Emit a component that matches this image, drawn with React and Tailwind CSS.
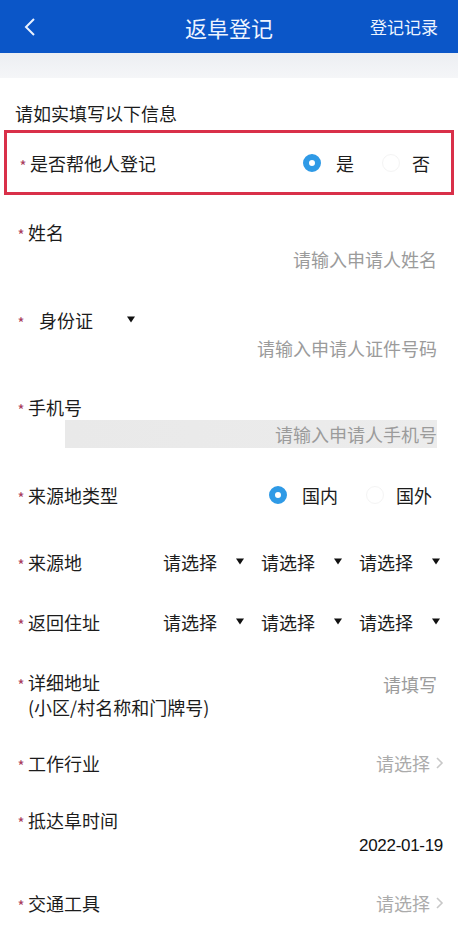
import React from 'react';

const font = { fontFamily: '"Noto Sans CJK SC", "Noto Sans", sans-serif' };

const Star = () => (
  <span className="block w-[14px] shrink-0 text-center text-[15px] leading-[24px] text-[#a83c5c] translate-y-[3px]">*</span>
);

const Tri = () => (
  <svg width="8" height="8" viewBox="0 0 8 8" className="block shrink-0 -translate-y-[1px]">
    <path d="M0 1.5 H8 L4 7.5 Z" fill="#111" />
  </svg>
);

const Chevron = () => (
  <svg width="9" height="14" viewBox="0 0 9 14" className="block shrink-0">
    <path d="M2 2 L7 7 L2 12" fill="none" stroke="#c8c8c8" strokeWidth="1.6" />
  </svg>
);

const Radio = ({ on, className = '' }) =>
  on ? (
    <span className={`block w-[18px] h-[18px] rounded-full border-[6px] border-[#2f9ae6] bg-white shrink-0 ${className}`} />
  ) : (
    <span className={`block w-[18px] h-[18px] rounded-full border border-[#f4f4f4] bg-white shrink-0 ${className}`} />
  );

const RadioPair = ({ a, b, className = '' }) => (
  <div className={`ml-auto flex items-center ${className}`}>
    <Radio on />
    <span className="ml-[15px]">{a}</span>
    <Radio className="ml-[28px]" />
    <span className="ml-[12px]">{b}</span>
  </div>
);

const Selects = () => (
  <div className="ml-auto -mr-[3px] flex items-center gap-[17px]">
    {[0, 1, 2].map((i) => (
      <div key={i} className="flex items-center gap-[19px]">
        <span>请选择</span>
        <Tri />
      </div>
    ))}
  </div>
);

const Label = ({ children, className = '' }) => (
  <div className={`flex items-center ${className}`}>
    <Star />
    {children}
  </div>
);

export default function App() {
  return (
    <div style={font} className="w-[458px] min-h-[951px] bg-white text-[18px] leading-[24px] text-[#1c1c1c] overflow-hidden">
      {/* header */}
      <div className="h-[53px] bg-[#0b56c8] flex items-center px-[20px] relative">
        <svg width="14" height="20" viewBox="0 0 14 20" className="ml-[3px]">
          <path d="M11 2 L3 10 L11 18" fill="none" stroke="#eaf2ff" strokeWidth="2" />
        </svg>
        <div className="absolute left-0 right-0 text-center text-[22px] text-[#eef4ff] pointer-events-none">返阜登记</div>
        <div className="ml-auto text-[17px] text-[#eef4ff]">登记记录</div>
      </div>
      <div className="h-[25px] bg-gradient-to-b from-[#eceef2] to-[#f5f6f8]" />

      <div className="px-[15px] pt-[23px]">请如实填写以下信息</div>

      {/* highlighted row */}
      <div className="mt-[5px] mx-[4px] h-[65px] border-[3px] border-[#d93049] flex items-center pl-[9px] pr-[21px]">
        <Label>是否帮他人登记</Label>
        <RadioPair a="是" b="否" />
      </div>

      <div className="pl-[14px] pr-[21px]">
        {/* 姓名 */}
        <Label className="mt-[25px]">姓名</Label>
        <div className="mt-[3px] text-right text-[#9b9b9b]">请输入申请人姓名</div>

        {/* 身份证 */}
        <Label className="mt-[37px]">
          <span className="ml-[11px]">身份证</span>
          <span className="ml-[34px]"><Tri /></span>
        </Label>
        <div className="mt-[4px] text-right text-[#9b9b9b]">请输入申请人证件号码</div>

        {/* 手机号 */}
        <Label className="mt-[35px]">手机号</Label>
        <div className="mt-[1px] ml-[51px] h-[28px] bg-gradient-to-r from-[#e9e9e9] to-[#ececec] flex items-center justify-end text-[#9b9b9b]">
          请输入申请人手机号
        </div>

        {/* 来源地类型 */}
        <div className="mt-[35px] flex items-center">
          <Label>来源地类型</Label>
          <RadioPair a="国内" b="国外" className="mr-[5px]" />
        </div>

        {/* 来源地 */}
        <div className="mt-[43px] flex items-center">
          <Label>来源地</Label>
          <Selects />
        </div>

        {/* 返回住址 */}
        <div className="mt-[36px] flex items-center">
          <Label>返回住址</Label>
          <Selects />
        </div>

        {/* 详细地址 */}
        <div className="mt-[36px] flex items-start">
          <div>
            <Label>详细地址</Label>
            <div className="ml-[14px] mt-[1px]">(小区/村名称和门牌号)</div>
          </div>
          <div className="ml-auto mt-[2px] text-[#9b9b9b]">请填写</div>
        </div>

        {/* 工作行业 */}
        <div className="mt-[32px] flex items-center">
          <Label>工作行业</Label>
          <div className="ml-auto -mr-[7px] flex items-center gap-[5px] text-[#ababab]">
            请选择
            <Chevron />
          </div>
        </div>

        {/* 抵达阜时间 */}
        <Label className="mt-[33px]">抵达阜时间</Label>
        <div
          className="mt-[2px] -mr-[6px] text-right text-[17px] text-[#111] tracking-[-0.3px]"
          style={{ fontFamily: '"Liberation Sans", Arial, sans-serif' }}
        >
          2022-01-19
        </div>

        {/* 交通工具 */}
        <div className="mt-[33px] flex items-center">
          <Label>交通工具</Label>
          <div className="ml-auto -mr-[7px] flex items-center gap-[5px] text-[#ababab]">
            请选择
            <Chevron />
          </div>
        </div>
      </div>
    </div>
  );
}
